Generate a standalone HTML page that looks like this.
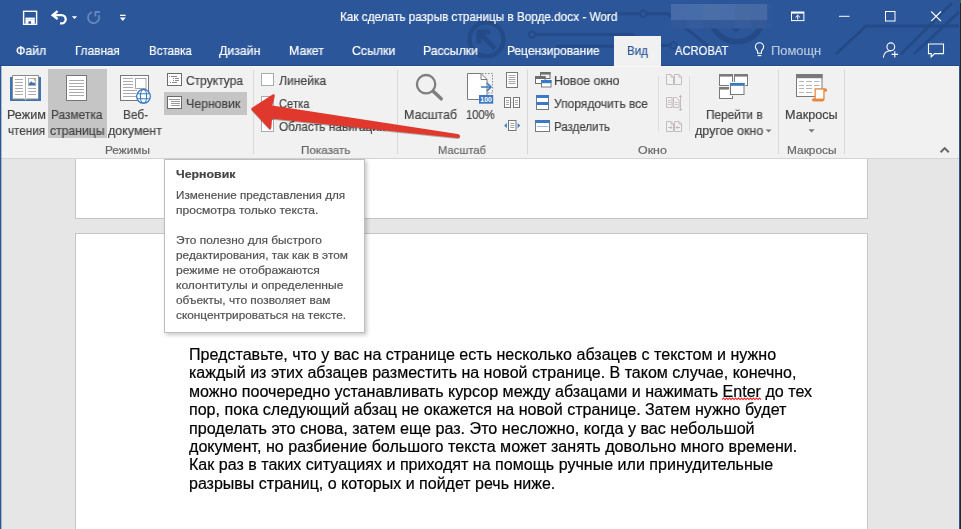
<!DOCTYPE html>
<html lang="ru">
<head>
<meta charset="utf-8">
<title>Как сделать разрыв страницы в Ворде.docx - Word</title>
<style>
html,body{margin:0;padding:0;}
body{width:961px;height:529px;overflow:hidden;position:relative;background:#e6e6e6;font-family:"Liberation Sans",sans-serif;}
.abs{position:absolute;}
.t{-webkit-text-stroke:0.2px currentColor;position:absolute;transform-origin:0 0;will-change:transform;white-space:pre;line-height:1;font-family:"Liberation Sans",sans-serif;}
#titlebar{left:0;top:0;width:961px;height:66px;background:#2b579a;border-bottom:1px solid #214a8b;box-sizing:border-box;}
#ribbon{left:0;top:66px;width:961px;height:92px;background:#f1f1f1;}
#tabvid{left:614px;top:36px;width:47px;height:32px;background:#f1f1f1;}
.sel{background:#c5c5c5;}
.vsep{width:1px;background:#d8d8d8;top:70px;height:84px;}
.ssep{width:1px;background:#dcdcdc;top:76px;height:55px;}
.cb{width:11px;height:11px;border:1px solid #ababab;background:#fff;box-sizing:content-box;}
.page{background:#fff;border:1px solid #c6c6c6;box-sizing:border-box;}
#tooltip{left:164px;top:159px;width:201px;height:174px;background:#fff;border:1px solid #bebebe;box-sizing:border-box;box-shadow:2px 2px 4px rgba(0,0,0,0.22);}
#lborder{left:0;top:66px;width:1px;height:463px;background:#2b579a;}
#rborder{left:959px;top:0;width:1px;height:529px;background:#2b579a;}
#rborder2{left:960px;top:0;width:1px;height:529px;background:#262626;}
svg{position:absolute;overflow:visible;}
</style>
</head>
<body>
<div id="titlebar" class="abs"></div>
<svg style="left:0;top:0" width="961" height="67" viewBox="0 0 961 67">
 <g fill="none" stroke="#244a87" stroke-width="3">
  <circle cx="486.4" cy="39.3" r="17" stroke-width="4.4"/>
  <path d="M495 48.5 L480 33.5 M478.8 43.5 V32.2 H490" stroke-width="4.8"/>
  <circle cx="532.1" cy="34.6" r="3.2" stroke-width="2"/>
  <path d="M535.5 34.6 H632 L646 45.5 H670"/>
  <circle cx="673.6" cy="45.5" r="3.2" stroke-width="2"/>
  <path d="M556 46.3 H614"/>
  <circle cx="643.3" cy="13.8" r="3.2" stroke-width="2"/>
  <path d="M600 13.8 H640 M646.6 13.8 H668 L708 46"/>
  <path d="M711 22 A27 27 0 0 0 763 22" stroke-width="5.5"/>
  <path d="M727 22 L736 30 L748 20" stroke-width="4"/>
  <path d="M961 26 H866 L836 54"/>
  <path d="M952 3 L901 54 M961 10 L914 54" stroke-width="3"/>
 </g>
 <!-- blurred user name -->
 <g>
  <rect x="671" y="4" width="16" height="16" fill="#466ba8"/><rect x="687" y="4" width="16" height="16" fill="#476da9"/>
  <rect x="703" y="4" width="16" height="16" fill="#4c6ea7"/><rect x="719" y="4" width="16" height="16" fill="#496da8"/>
  <rect x="735" y="4" width="16" height="16" fill="#486aa3"/><rect x="751" y="4" width="16.5" height="16" fill="#4669a3"/>
  <rect x="671" y="20" width="16" height="8.5" fill="#33589a"/><rect x="687" y="20" width="16" height="8.5" fill="#365c9e"/>
  <rect x="703" y="20" width="16" height="8.5" fill="#335999"/><rect x="719" y="20" width="16" height="8.5" fill="#345a9a"/>
  <rect x="735" y="20" width="16" height="8.5" fill="#375c9b"/><rect x="751" y="20" width="16.5" height="8.5" fill="#345999"/>
  <rect x="767.5" y="4" width="5" height="24.5" fill="#2f5799"/>
 </g>
</svg>

<div id="tabvid" class="abs"></div>
<div id="ribbon" class="abs"></div>

<!-- document area -->
<div class="abs page" style="left:75px;top:150px;width:793px;height:69px;"></div>
<div class="abs page" style="left:75px;top:233px;width:793px;height:310px;"></div>
<div id="ribboncover" class="abs" style="left:0;top:66px;width:961px;height:92px;background:#f1f1f1;"></div>
<div class="abs" style="left:0;top:66px;width:961px;height:1px;background:#f8f8f8;"></div>
<div class="abs" style="left:0;top:158px;width:961px;height:1px;background:#d4d4d4;"></div>

<!-- selected buttons -->
<div class="abs sel" style="left:48px;top:69px;width:59px;height:69px;"></div>
<div class="abs sel" style="left:164px;top:92px;width:83px;height:23px;"></div>

<!-- separators -->
<div class="abs vsep" style="left:253px;"></div>
<div class="abs vsep" style="left:397px;"></div>
<div class="abs vsep" style="left:527px;"></div>
<div class="abs vsep" style="left:778px;"></div>
<div class="abs vsep" style="left:844px;"></div>
<div class="abs ssep" style="left:658px;"></div>
<div class="abs ssep" style="left:689px;"></div>

<!-- checkboxes -->
<div class="abs cb" style="left:261px;top:73px;"></div>
<div class="abs cb" style="left:261px;top:96px;"></div>
<div class="abs cb" style="left:261px;top:119px;"></div>

<!-- title bar icons -->
<svg style="left:0;top:0" width="961" height="67" viewBox="0 0 961 67">
 <!-- save -->
 <rect x="23.6" y="11.3" width="13" height="13" fill="none" stroke="#fff" stroke-width="1.4"/>
 <rect x="25.4" y="17.6" width="9.4" height="2.2" fill="#fff"/>
 <rect x="25.4" y="19.8" width="9.4" height="4" fill="#fff"/>
 <rect x="28.5" y="21.3" width="2.5" height="2.4" fill="#2b579a"/>
 <!-- undo -->
 <path d="M57.6 11.2 L52.6 15.2 L57.6 19 M53.4 15.2 H61.6 A4.1 4.1 0 0 1 61.6 23.4 H60" fill="none" stroke="#fff" stroke-width="2.3" stroke-linejoin="miter"/>
 <path d="M71.8 16.2 H77.2 L74.5 19 Z" fill="#fff"/>
 <!-- redo disabled -->
 <path d="M92 12.2 A5.6 5.6 0 1 0 98.7 15.2" fill="none" stroke="#6786bd" stroke-width="1.8"/>
 <path d="M95.4 16.6 V12 H100" fill="none" stroke="#6786bd" stroke-width="1.8"/>
 <!-- customize -->
 <rect x="120" y="14.7" width="5.6" height="1.3" fill="#fff"/>
 <path d="M119.8 17.6 H125.8 L122.8 21 Z" fill="#fff"/>
 <!-- ribbon display options -->
 <rect x="791.5" y="12" width="12.4" height="8.6" fill="none" stroke="#fff" stroke-width="1"/>
 <rect x="791.5" y="12" width="12.4" height="1.6" fill="#fff"/>
 <path d="M797.7 19.6 V15.4 M795.5 17.3 L797.7 15.2 L799.9 17.3" fill="none" stroke="#fff" stroke-width="1"/>
 <!-- minimize -->
 <rect x="839" y="15.8" width="10.5" height="1" fill="#fff"/>
 <!-- maximize -->
 <rect x="885.5" y="11.5" width="9.5" height="9.5" fill="none" stroke="#fff" stroke-width="1"/>
 <!-- close -->
 <path d="M931.2 11.5 L941 21.2 M941 11.5 L931.2 21.2" stroke="#fff" stroke-width="1.1" fill="none"/>
 <!-- lightbulb -->
 <path d="M757.6 53.2 V51.6 C757.6 50 755.4 49 755.4 46.9 A4.1 4.1 0 0 1 763.6 46.9 C763.6 49 761.4 50 761.4 51.6 V53.2 Z" fill="none" stroke="#fff" stroke-width="1.1"/>
 <path d="M757.6 55.6 H761.4" stroke="#fff" stroke-width="1.1"/>
 <!-- share (person +) -->
 <circle cx="890.8" cy="46.8" r="3.9" fill="none" stroke="#fff" stroke-width="1.1"/>
 <path d="M883.3 57.6 C883.8 53 886.5 50.7 890.8 50.7" fill="none" stroke="#fff" stroke-width="1.1"/>
 <path d="M894.8 51.2 V57.6 M891.6 54.4 H898" stroke="#fff" stroke-width="1.1" fill="none"/>
 <!-- comments -->
 <path d="M928.5 44 H943.5 V53.6 H934.6 L931.2 57 V53.6 H928.5 Z" fill="none" stroke="#fff" stroke-width="1.1"/>
</svg>

<!-- ribbon icons group 1 -->
<svg style="left:0;top:0" width="961" height="160" viewBox="0 0 961 160">
 <!-- read mode book -->
 <rect x="10" y="77" width="31" height="24" fill="#3a73b9"/>
 <path d="M12.5 75.5 H38.5 V99 H27.5 Q25.5 99 25.5 100.2 Q25.5 99 23.5 99 H12.5 Z" fill="#fff" stroke="#8c8c8c" stroke-width="1"/>
 <path d="M25.5 76.5 V100" stroke="#b5b5b5" stroke-width="1"/>
 <g stroke="#ababab" stroke-width="1">
  <path d="M15 79.5 H23 M15 82.5 H23 M15 85.5 H23 M15 88.5 H23 M15 91.5 H23 M15 94.5 H23"/>
  <path d="M28.2 88.5 H36 M28.2 91.5 H36 M28.2 94.5 H36"/>
 </g>
 <rect x="28.5" y="78.5" width="7.2" height="7" fill="#fff" stroke="#a5a5a5" stroke-width="0.9"/>
 <path d="M29 85 V83.6 L31.2 81.2 L33 83 L33.8 82.3 L35.2 83.6 V85 Z" fill="#3a73b9"/>
 <rect x="33.6" y="79" width="1.6" height="1.6" fill="#f0a94e"/>
 <!-- print layout page -->
 <rect x="66.5" y="75.5" width="20" height="25" fill="#fff" stroke="#777" stroke-width="1"/>
 <path d="M69 80.5 H84 M69 83.5 H84 M69 86.5 H84 M69 89.5 H84 M69 92.5 H84 M69 95.5 H84" stroke="#ababab" stroke-width="1"/>
 <!-- web layout -->
 <rect x="120.5" y="75.5" width="28" height="25" fill="#fff" stroke="#777" stroke-width="1"/>
 <path d="M123 78.5 H133 M123 81.5 H133 M123 84.5 H133 M123 87.5 H133 M123 90.5 H137 M123 93.5 H136 M123 96.5 H136" stroke="#ababab" stroke-width="1"/>
 <rect x="135.5" y="78.5" width="10.5" height="10" fill="#fff" stroke="#a5a5a5" stroke-width="1"/>
 <circle cx="143.5" cy="96.3" r="6.9" fill="#fff" stroke="#3b79c3" stroke-width="1.3"/>
 <ellipse cx="143.5" cy="96.3" rx="3.1" ry="6.9" fill="none" stroke="#3b79c3" stroke-width="1.1"/>
 <path d="M137.2 93.8 H149.8 M137.2 98.8 H149.8" stroke="#3b79c3" stroke-width="1.1" fill="none"/>
 <!-- outline -->
 <rect x="167.5" y="73.5" width="14" height="12" fill="#fff" stroke="#6a6a6a" stroke-width="1"/>
 <g fill="#8a8a8a">
  <rect x="169" y="76" width="1" height="1"/><rect x="171" y="76" width="6" height="1"/>
  <rect x="173" y="78" width="1" height="1"/><rect x="175" y="78" width="4" height="1"/>
  <rect x="173" y="80" width="1" height="1"/><rect x="175" y="80" width="4" height="1"/>
  <rect x="170" y="82" width="1" height="1"/><rect x="172" y="82" width="5" height="1"/>
 </g>
 <!-- draft -->
 <rect x="167.5" y="96.5" width="14" height="12" fill="#fff" stroke="#6a6a6a" stroke-width="1"/>
 <g fill="#9a9a9a">
  <rect x="169" y="99" width="11" height="1"/>
  <rect x="171" y="101" width="9" height="1"/>
  <rect x="171" y="103" width="9" height="1"/>
  <rect x="171" y="105" width="9" height="1"/>
 </g>
</svg>

<!-- ribbon icons group 2 -->
<svg style="left:0;top:0" width="961" height="160" viewBox="0 0 961 160">
 <!-- magnifier -->
 <circle cx="426.1" cy="84.2" r="9.2" fill="none" stroke="#7f7f7f" stroke-width="2.3"/>
 <path d="M433.2 91.2 L441.2 98.8" stroke="#7f7f7f" stroke-width="3.5" stroke-linecap="round"/>
 <!-- 100% -->
 <path d="M467.5 73.5 H481 L487 79.5 V99.5 H467.5 Z" fill="#fff" stroke="#7a7a7a" stroke-width="1"/>
 <path d="M481 73.5 V79.5 H487" fill="none" stroke="#7a7a7a" stroke-width="1"/>
 <path d="M482 73.5 H492.5 V93 H487.5" fill="none" stroke="#8a8a8a" stroke-width="1" stroke-dasharray="1.5 1.5"/>
 <path d="M481 87 H490.5 M487 83 L491 87 L487 91" fill="none" stroke="#3b79c3" stroke-width="1.6"/>
 <rect x="479" y="95" width="14.2" height="8.7" fill="#3b79c3"/>
 <text x="486.1" y="102.3" font-family="Liberation Sans, sans-serif" font-size="7.6" font-weight="700" fill="#fff" text-anchor="middle" textLength="11.6" lengthAdjust="spacingAndGlyphs">100</text>
 <!-- one page -->
 <rect x="506.5" y="72.5" width="11" height="15" fill="#fff" stroke="#777" stroke-width="1"/>
 <path d="M508.5 75.5 H515.5 M508.5 77.5 H515.5 M508.5 79.5 H515.5 M508.5 81.5 H515.5 M508.5 83.5 H515.5" stroke="#a5a5a5" stroke-width="1"/>
 <!-- multiple pages -->
 <rect x="504.5" y="97.5" width="6" height="10" fill="#fff" stroke="#777" stroke-width="1"/>
 <rect x="513.5" y="97.5" width="6" height="10" fill="#fff" stroke="#777" stroke-width="1"/>
 <path d="M506 100.5 H509 M506 102.5 H509 M506 104.5 H509 M515 100.5 H518 M515 102.5 H518 M515 104.5 H518" stroke="#a5a5a5" stroke-width="1"/>
 <!-- page width -->
 <rect x="508.5" y="120.5" width="7.5" height="10" fill="#fff" stroke="#777" stroke-width="1"/>
 <path d="M510.3 123.5 H514.2 M510.3 125.5 H514.2 M510.3 127.5 H514.2" stroke="#a5a5a5" stroke-width="1"/>
 <path d="M506.8 123 V128.2 L504.2 125.6 Z M517.6 123 V128.2 L520.2 125.6 Z" fill="#3b79c3"/>
 <!-- new window -->
 <rect x="540.5" y="72.5" width="9.5" height="6" fill="#f1f1f1" stroke="#6f6f6f" stroke-width="1"/>
 <rect x="540" y="72" width="10.5" height="2.6" fill="#6f6f6f"/>
 <rect x="535.5" y="76.5" width="9.5" height="7" fill="#fff" stroke="#6f6f6f" stroke-width="1"/>
 <rect x="535" y="76" width="10.5" height="3" fill="#6f6f6f"/>
 <rect x="541.5" y="80.5" width="9.5" height="6.5" fill="#fff" stroke="#7a7a7a" stroke-width="1"/>
 <rect x="541" y="80" width="10.5" height="3.2" fill="#3b79c3"/>
 <!-- arrange all -->
 <rect x="536.5" y="95.5" width="12" height="14" fill="#fff" stroke="#7a7a7a" stroke-width="1"/>
 <rect x="536" y="95" width="13" height="3" fill="#3b79c3"/>
 <rect x="536" y="102" width="13" height="3" fill="#3b79c3"/>
 <!-- split -->
 <rect x="535.5" y="120.5" width="14" height="11" fill="#fff" stroke="#7a7a7a" stroke-width="1"/>
 <rect x="535" y="120" width="15" height="3" fill="#3b79c3"/>
 <path d="M537.5 126.5 H548" stroke="#3b79c3" stroke-width="1" stroke-dasharray="1 1"/>
 <!-- disabled: side by side -->
 <g fill="#f3f1f1" stroke="#c4bcbc" stroke-width="1">
  <path d="M666.5 74.5 H671 L673.5 77 V84.5 H666.5 Z"/><path d="M671 74.5 V77 H673.5" fill="none"/>
  <path d="M674.5 74.5 H679 L681.5 77 V84.5 H674.5 Z"/><path d="M679 74.5 V77 H681.5" fill="none"/>
  <path d="M666.5 97.5 H672 V107.5 H666.5 Z"/>
  <path d="M673.5 97.5 H676.5 L679 100 V107.5 H673.5 Z"/>
  <path d="M666.5 121.5 H671 L673.5 124 V131.5 H666.5 Z"/><path d="M671 121.5 V124 H673.5" fill="none"/>
  <path d="M674.5 121.5 H679 L681.5 124 V131.5 H674.5 Z"/><path d="M679 121.5 V124 H681.5" fill="none"/>
 </g>
 <g fill="none" stroke="#c4bcbc" stroke-width="1">
  <path d="M668 100.5 H670.5 M668 102.5 H670.5 M668 104.5 H670.5 M675 102.5 H677.5 M675 104.5 H677.5"/>
  <path d="M680.5 95.5 V110.5 M679 97 L680.5 95.3 L682 97 M679 109 L680.5 110.7 L682 109"/>
  <path d="M668 127.5 H672 M670.5 126 L672 127.5 L670.5 129 M680 127.5 H676 M677.5 126 L676 127.5 L677.5 129"/>
 </g>
 <!-- switch windows -->
 <rect x="719.5" y="74.5" width="13" height="11" fill="#fff" stroke="#7a7a7a" stroke-width="1"/>
 <rect x="719" y="74" width="14" height="2.6" fill="#7a7a7a"/>
 <rect x="734.5" y="74.5" width="13" height="11" fill="#fff" stroke="#7a7a7a" stroke-width="1"/>
 <rect x="734" y="74" width="14" height="2.6" fill="#7a7a7a"/>
 <rect x="719.5" y="87.5" width="13" height="11" fill="#fff" stroke="#7a7a7a" stroke-width="1"/>
 <rect x="719" y="87" width="14" height="2.6" fill="#7a7a7a"/>
 <rect x="729" y="81.8" width="16.2" height="14" fill="#f1f1f1"/>
 <rect x="730.5" y="83.5" width="13.5" height="11" fill="#fff" stroke="#7a7a7a" stroke-width="1"/>
 <rect x="730" y="83" width="14.5" height="2.8" fill="#3b79c3"/>
 <path d="M765.6 129.4 H771.6 L768.6 132.6 Z" fill="#777"/>
 <!-- macros -->
 <rect x="796.5" y="74.5" width="25.5" height="22" fill="#fff" stroke="#7a7a7a" stroke-width="1"/>
 <rect x="796" y="74" width="26.5" height="4.2" fill="#7a7a7a"/>
 <g stroke="#b5b5b5" stroke-width="1">
  <path d="M799 81.5 H804 M806 81.5 H812 M814 81.5 H819.5"/>
  <path d="M799 85.5 H804 M806 85.5 H812 M814 85.5 H819.5"/>
  <path d="M799 88.5 H804 M806 88.5 H812"/>
  <path d="M799 92.5 H804 M806 92.5 H812"/>
 </g>
 <path d="M814.5 88.3 H825 Q827 88.3 827 90.2 V91.6 H824.6 V99.3 Q824.6 101.4 822.4 101.4 H813.8 Q812 101.4 812 99.8 Q812 98.2 813.8 98.2 H814.5 Z" fill="#e8873a"/>
 <path d="M815.8 89.6 H823.3 V98.6 H815.8 Z" fill="#fff"/>
 <path d="M808.5 129.2 H814.7 L811.6 132.4 Z" fill="#777"/>
 <!-- collapse chevron -->
 <path d="M940.6 152.2 L944.7 148.1 L948.8 152.2" fill="none" stroke="#666" stroke-width="2"/>
</svg>

<!--ICONS-->

<span class="t" style="left:340.0px;top:11.0px;font-size:12.6px;transform:scaleX(0.9340);color:#ffffff;">Как сделать разрыв страницы в Ворде.docx - Word</span>
<span class="t" style="left:16.3px;top:45.0px;font-size:12.6px;transform:scaleX(0.9816);color:#ffffff;">Файл</span>
<span class="t" style="left:75.3px;top:45.0px;font-size:12.6px;transform:scaleX(0.9366);color:#ffffff;">Главная</span>
<span class="t" style="left:148.8px;top:45.0px;font-size:12.6px;transform:scaleX(0.9164);color:#ffffff;">Вставка</span>
<span class="t" style="left:219.3px;top:45.0px;font-size:12.6px;transform:scaleX(0.9777);color:#ffffff;">Дизайн</span>
<span class="t" style="left:288.8px;top:45.0px;font-size:12.6px;transform:scaleX(0.9788);color:#ffffff;">Макет</span>
<span class="t" style="left:351.8px;top:45.0px;font-size:12.6px;transform:scaleX(0.9787);color:#ffffff;">Ссылки</span>
<span class="t" style="left:423.3px;top:45.0px;font-size:12.6px;transform:scaleX(0.9711);color:#ffffff;">Рассылки</span>
<span class="t" style="left:506.8px;top:45.0px;font-size:12.6px;transform:scaleX(0.9522);color:#ffffff;">Рецензирование</span>
<span class="t" style="left:626.8px;top:45.0px;font-size:12.6px;transform:scaleX(0.9168);color:#2b579a;">Вид</span>
<span class="t" style="left:675.3px;top:45.0px;font-size:12.6px;transform:scaleX(0.8907);color:#ffffff;">ACROBAT</span>
<span class="t" style="left:771.0px;top:45.0px;font-size:12.6px;transform:scaleX(1.0235);color:#b4c4de;">Помощн</span>
<span class="t" style="left:6.8px;top:109.0px;font-size:12.6px;transform:scaleX(0.9890);color:#444444;">Режим</span>
<span class="t" style="left:7.7px;top:125.0px;font-size:12.6px;transform:scaleX(0.9246);color:#444444;">чтения</span>
<span class="t" style="left:51.3px;top:109.0px;font-size:12.6px;transform:scaleX(0.9445);color:#444444;">Разметка</span>
<span class="t" style="left:50.1px;top:125.0px;font-size:12.6px;transform:scaleX(0.9693);color:#444444;">страницы</span>
<span class="t" style="left:123.2px;top:109.0px;font-size:12.6px;transform:scaleX(0.9411);color:#444444;">Веб-</span>
<span class="t" style="left:108.3px;top:125.0px;font-size:12.6px;transform:scaleX(0.9881);color:#444444;">документ</span>
<span class="t" style="left:185.7px;top:75.0px;font-size:12.6px;transform:scaleX(0.9540);color:#444444;">Структура</span>
<span class="t" style="left:186.1px;top:98.0px;font-size:12.6px;transform:scaleX(0.9783);color:#444444;">Черновик</span>
<span class="t" style="left:279.2px;top:75.0px;font-size:12.6px;transform:scaleX(0.9635);color:#444444;">Линейка</span>
<span class="t" style="left:279.3px;top:98.0px;font-size:12.6px;transform:scaleX(0.8876);color:#444444;">Сетка</span>
<span class="t" style="left:279.3px;top:121.0px;font-size:12.6px;transform:scaleX(0.9398);color:#444444;">Область навигации</span>
<span class="t" style="left:403.7px;top:109.0px;font-size:12.6px;transform:scaleX(0.9835);color:#444444;">Масштаб</span>
<span class="t" style="left:466.1px;top:109.0px;font-size:12.6px;transform:scaleX(0.8877);color:#444444;">100%</span>
<span class="t" style="left:553.8px;top:75.0px;font-size:12.6px;transform:scaleX(0.9844);color:#444444;">Новое окно</span>
<span class="t" style="left:553.8px;top:98.0px;font-size:12.6px;transform:scaleX(0.9553);color:#444444;">Упорядочить все</span>
<span class="t" style="left:553.8px;top:121.0px;font-size:12.6px;transform:scaleX(0.9164);color:#444444;">Разделить</span>
<span class="t" style="left:705.8px;top:109.0px;font-size:12.6px;transform:scaleX(0.9419);color:#444444;">Перейти в</span>
<span class="t" style="left:695.1px;top:125.0px;font-size:12.6px;transform:scaleX(0.9926);color:#444444;">другое окно</span>
<span class="t" style="left:784.8px;top:109.0px;font-size:12.6px;transform:scaleX(0.9997);color:#444444;">Макросы</span>
<span class="t" style="left:104.8px;top:145.0px;font-size:11.8px;transform:scaleX(1.0009);color:#666666;">Режимы</span>
<span class="t" style="left:301.3px;top:145.0px;font-size:11.8px;transform:scaleX(0.9849);color:#666666;">Показать</span>
<span class="t" style="left:437.8px;top:145.0px;font-size:11.8px;transform:scaleX(0.9488);color:#666666;">Масштаб</span>
<span class="t" style="left:637.8px;top:145.0px;font-size:11.8px;transform:scaleX(1.0539);color:#666666;">Окно</span>
<span class="t" style="left:786.8px;top:145.0px;font-size:11.8px;transform:scaleX(1.0064);color:#666666;">Макросы</span>

<!-- red arrow -->
<svg id="arrow" style="left:0;top:0;filter:drop-shadow(0.4px 1px 0.7px rgba(0,0,0,0.28));" width="961" height="529" viewBox="0 0 961 529">
<path d="M252 110.3 Q250.6 108.9 252 107.8 L272.6 94.6 Q274.9 93.4 274.7 96 L272.2 105.5 L457.6 133.9 Q460.3 134.6 460 136.4 Q459.6 138.2 457.2 137.9 L272 118.7 L271.2 128 Q270.6 130.2 268.8 128.6 Z" fill="#e0382c"/>
</svg>

<!-- tooltip -->
<div id="tooltip" class="abs"></div>
<span class="t" style="left:176.3px;top:169.0px;font-size:11.8px;transform:scaleX(1.0458);color:#444444;font-weight:700;">Черновик</span>
<span class="t" style="left:176.3px;top:189.0px;font-size:11.6px;transform:scaleX(1.0073);color:#525252;">Изменение представления для</span>
<span class="t" style="left:176.3px;top:204.0px;font-size:11.6px;transform:scaleX(1.0387);color:#525252;">просмотра только текста.</span>
<span class="t" style="left:176.3px;top:234.0px;font-size:11.6px;transform:scaleX(1.0243);color:#525252;">Это полезно для быстрого</span>
<span class="t" style="left:176.3px;top:249.0px;font-size:11.6px;transform:scaleX(1.0205);color:#525252;">редактирования, так как в этом</span>
<span class="t" style="left:176.3px;top:264.0px;font-size:11.6px;transform:scaleX(1.0430);color:#525252;">режиме не отображаются</span>
<span class="t" style="left:176.3px;top:279.0px;font-size:11.6px;transform:scaleX(1.0403);color:#525252;">колонтитулы и определенные</span>
<span class="t" style="left:176.3px;top:294.0px;font-size:11.6px;transform:scaleX(1.0239);color:#525252;">объекты, что позволяет вам</span>
<span class="t" style="left:176.3px;top:309.0px;font-size:11.6px;transform:scaleX(1.0200);color:#525252;">сконцентрироваться на тексте.</span>

<!-- body text -->
<span class="t" style="left:188.7px;top:347.0px;font-size:16px;transform:scaleX(1.0042);color:#000000;">Представьте, что у вас на странице есть несколько абзацев с текстом и нужно</span>
<span class="t" style="left:188.7px;top:365.0px;font-size:16px;transform:scaleX(0.9999);color:#000000;">каждый из этих абзацев разместить на новой странице. В таком случае, конечно,</span>
<span class="t" style="left:188.7px;top:384.0px;font-size:16px;transform:scaleX(1.0044);color:#000000;">можно поочередно устанавливать курсор между абзацами и нажимать Enter до тех</span>
<span class="t" style="left:188.7px;top:402.0px;font-size:16px;transform:scaleX(1.0030);color:#000000;">пор, пока следующий абзац не окажется на новой странице. Затем нужно будет</span>
<span class="t" style="left:188.7px;top:421.0px;font-size:16px;transform:scaleX(1.0077);color:#000000;">проделать это снова, затем еще раз. Это несложно, когда у вас небольшой</span>
<span class="t" style="left:188.7px;top:439.0px;font-size:16px;transform:scaleX(1.0063);color:#000000;">документ, но разбиение большого текста может занять довольно много времени.</span>
<span class="t" style="left:188.7px;top:457.0px;font-size:16px;transform:scaleX(1.0034);color:#000000;">Как раз в таких ситуациях и приходят на помощь ручные или принудительные</span>
<span class="t" style="left:188.7px;top:476.0px;font-size:16px;transform:scaleX(0.9992);color:#000000;">разрывы страниц, о которых и пойдет речь ниже.</span>
<svg style="left:722.3px;top:397px;" width="40" height="4" viewBox="0 0 40 4"><path d="M0 2.6 L1.5 1 L3 2.6 L4.5 1 L6 2.6 L7.5 1 L9 2.6 L10.5 1 L12 2.6 L13.5 1 L15 2.6 L16.5 1 L18 2.6 L19.5 1 L21 2.6 L22.5 1 L24 2.6 L25.5 1 L27 2.6 L28.5 1 L30 2.6 L31.5 1 L33 2.6 L34.5 1 L36 2.6 L37.5 1 L39 2.6" fill="none" stroke="#ff1a1a" stroke-width="1.05" stroke-linejoin="round"/></svg>

<div id="lborder" class="abs"></div>
<div class="abs" style="left:1px;top:66px;width:1px;height:463px;background:rgba(43,87,154,0.35);"></div>
<div id="rborder" class="abs"></div>
<div id="rborder2" class="abs"></div>
<div class="abs" style="left:960px;top:0;width:1px;height:3px;background:#1e7a3c;"></div>
</body>
</html>
